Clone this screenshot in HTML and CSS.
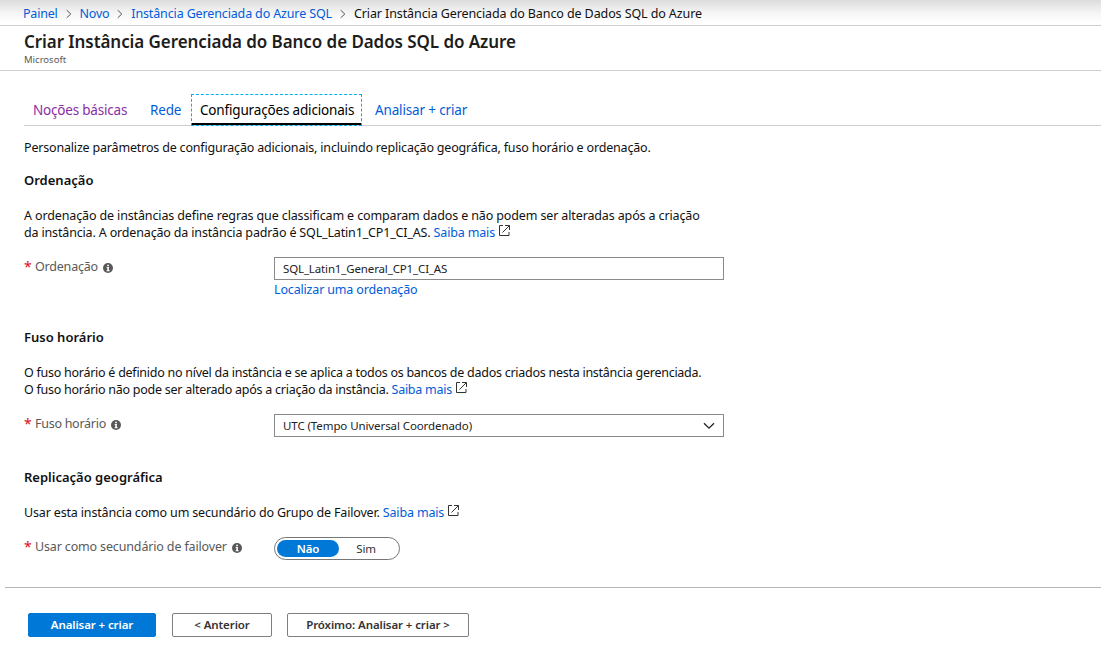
FILE: index.html
```
<!DOCTYPE html>
<html lang="pt-BR">
<head>
<meta charset="utf-8">
<title>Criar Instância Gerenciada do Banco de Dados SQL do Azure</title>
<link rel="stylesheet" href="styles.css">
</head>
<body>
<svg class="defs" width="0" height="0" aria-hidden="true">
  <symbol id="sep" viewBox="0 0 6 10"><path d="M.7 1.2 4.8 5 .7 8.8" fill="none" stroke="#555" stroke-width="1"/></symbol>
  <symbol id="ext" viewBox="0 0 11 11"><path d="M4 .5H.5v10h9.500V7M6 .5h4.500v4.500M10.300.7 3.500 7.500" fill="none" stroke="#333" stroke-width="1"/></symbol>
  <symbol id="info" viewBox="0 0 10 10"><circle cx="5" cy="5" r="5" fill="#595959"/><path d="M4.200 1.800h1.700v1.400H4.200zM3.700 4.100h2.200v3.200h.7v.9H3.600v-.9h.7V5h-.6z" fill="#fff"/></symbol>
</svg>
<nav class="crumbs">
  <a class="c1">Painel</a><svg class="sep"><use href="#sep"/></svg>
  <a class="c2">Novo</a><svg class="sep"><use href="#sep"/></svg>
  <a class="c3">Instância Gerenciada do Azure SQL</a><svg class="sep"><use href="#sep"/></svg>
  <span class="c4">Criar Instância Gerenciada do Banco de Dados SQL do Azure</span>
</nav>
<header class="head">
  <h1>Criar Instância Gerenciada do Banco de Dados SQL do Azure</h1>
  <p>Microsoft</p>
</header>
<main class="main">
  <div class="tabs">
    <a class="tab visited">Noções básicas</a>
    <a class="tab rede">Rede</a>
    <a class="tab active">Configurações adicionais</a>
    <a class="tab last">Analisar + criar</a>
  </div>
  <p class="text intro">Personalize parâmetros de configuração adicionais, incluindo replicação geográfica, fuso horário e ordenação.</p>

  <section class="section collation">
    <h2>Ordenação</h2>
    <p class="text"><span class="l1">A ordenação de instâncias define regras que classificam e comparam dados e não podem ser alteradas após a criação</span><br><span class="l2">da instância. A ordenação da instância padrão é SQL_Latin1_CP1_CI_AS. <a>Saiba mais</a></span><svg class="ext"><use href="#ext"/></svg></p>
    <div class="field">
      <div class="label"><b>*</b><span>Ordenação</span><svg class="info"><use href="#info"/></svg></div>
      <div class="control">
        <div class="box"><span class="v1">SQL_Latin1_General_CP1_CI_AS</span></div>
        <a class="find">Localizar uma ordenação</a>
      </div>
    </div>
  </section>

  <section class="section zone">
    <h2>Fuso horário</h2>
    <p class="text"><span class="l3">O fuso horário é definido no nível da instância e se aplica a todos os bancos de dados criados nesta instância gerenciada.</span><br><span class="l4">O fuso horário não pode ser alterado após a criação da instância. <a>Saiba mais</a></span><svg class="ext"><use href="#ext"/></svg></p>
    <div class="field">
      <div class="label"><b>*</b><span class="lb2">Fuso horário</span><svg class="info"><use href="#info"/></svg></div>
      <div class="control">
        <div class="box"><span class="v2">UTC (Tempo Universal Coordenado)</span><svg class="chev" viewBox="0 0 12 8"><path d="M1 1.200 6 6.200l5-5" fill="none" stroke="#222" stroke-width="1.300"/></svg></div>
      </div>
    </div>
  </section>

  <section class="section geo">
    <h2>Replicação geográfica</h2>
    <p class="text"><span class="l5">Usar esta instância como um secundário do Grupo de Failover. <a>Saiba mais</a></span><svg class="ext"><use href="#ext"/></svg></p>
    <div class="field">
      <div class="label"><b>*</b><span class="lb3">Usar como secundário de failover</span><svg class="info"><use href="#info"/></svg></div>
      <div class="control">
        <div class="toggle"><span class="on">Não</span><span class="off">Sim</span></div>
      </div>
    </div>
  </section>
</main>
<footer class="foot">
  <button class="btn primary">Analisar + criar</button>
  <button class="btn prev">&lt; Anterior</button>
  <button class="btn next">Próximo: Analisar + criar &gt;</button>
</footer>
</body>
</html>
```
FILE: styles.css
```
* { box-sizing: border-box; }
body { margin: 0; background: #fff; color: #111; font-family: "Noto Sans", "Open Sans", sans-serif; font-size: 12.5px; letter-spacing: -0.2px; overflow: hidden; }
h1, h2, p { margin: 0; }
a { color: #015cda; text-decoration: none; }
.defs { display: block; height: 0; }
.crumbs { height: 26px; padding: 2px 0 0 23px; display: flex; align-items: center; white-space: nowrap; border-bottom: 1px solid #d0d0d0; background: linear-gradient(#dcdcdc, #f4f4f4 50%, #fff 90%); line-height: 23px; }
.c2 { letter-spacing: -0.25px; }
.c3 { letter-spacing: -0.14px; }
.c4 { letter-spacing: -0.1px; }
.sep { width: 6px; height: 10px; margin: 0 8px; flex: none; }
.head { height: 45px; padding: 4px 0 0 24px; border-bottom: 1px solid #d0d0d0; }
.head h1 { font-size: 17px; line-height: 24px; font-weight: 600; color: #1d1d1d; letter-spacing: -0.07px; white-space: nowrap; }
.head p { font-size: 9.5px; line-height: 12px; color: #595959; letter-spacing: 0; }
.main { padding: 23px 0 0 24px; }
.tabs { height: 32px; display: flex; border-bottom: 1px solid #d0d0d0; font-size: 13.5px; line-height: 33px; letter-spacing: -0.15px; white-space: nowrap; }
.tab { height: 32px; }
.visited { width: 126px; padding-left: 9px; color: #8a2da5; letter-spacing: -0.2px; }
.rede { width: 41px; }
.active { width: 171px; height: 32px; padding-left: 8px; line-height: 31px; color: #000; border: 1px dashed #00b0f0; box-shadow: inset 0 -2px #000; letter-spacing: -0.17px; }
.last { padding-left: 13px; }
.text { line-height: 17px; white-space: nowrap; color: #111; }
.intro { margin-top: 13px; letter-spacing: -0.18px; }
.l1 { letter-spacing: -0.13px; }
.l2, .l5, .find { letter-spacing: -0.16px; }
.l3 { letter-spacing: -0.26px; }
.l4 { letter-spacing: -0.26px; }
.lb2 { letter-spacing: -0.27px; }
.lb3 { letter-spacing: -0.15px; }
.section h2 { font-size: 13px; font-weight: 600; line-height: 18px; letter-spacing: 0; color: #111; }
.section .text { margin-top: 18px; }
.collation { margin-top: 15px; height: 157px; }
.zone { height: 140px; }
.ext { width: 11px; height: 11px; margin-left: 4px; position: relative; top: -1px; }
.field { display: flex; margin-top: 16px; }
.label { width: 250px; display: flex; line-height: 19px; color: #595959; white-space: nowrap; }
.label b { width: 11px; color: #e00b1c; font-size: 14px; font-weight: 400; }
.info { width: 10px; height: 10px; margin: 6px 0 0 5px; }
.box { width: 450px; height: 23px; padding: 0 8px; border: 1px solid #8a8a8a; display: flex; align-items: center; justify-content: space-between; font-size: 11.5px; color: #222; }
.v1 { letter-spacing: -0.14px; }
.v2 { letter-spacing: -0.09px; }
.chev { width: 12px; height: 8px; }
.find { display: block; line-height: 18px; margin-top: 1px; }
.toggle { width: 126px; height: 23px; padding: 2px; border: 1px solid #767676; border-radius: 12px; display: flex; font-size: 11.5px; line-height: 18px; text-align: center; }
.on { width: 62px; height: 17px; border-radius: 9px; background: #0078d7; color: #fff; font-weight: 600; }
.off { width: 54px; color: #333; }
.foot { margin: 27px 0 0 5px; padding: 25px 0 0 23px; border-top: 1px solid #b5b5b5; display: flex; }
.btn { height: 24px; padding: 0; border: 1px solid #7f7f7f; border-radius: 2px; background: #fff; color: #333; font: 600 11.5px/20px "Noto Sans", "Open Sans", sans-serif; letter-spacing: -0.1px; white-space: nowrap; }
.primary { width: 128px; background: #0078d7; border-color: #0078d7; color: #fff; }
.prev { width: 100px; margin-left: 16px; }
.next { width: 182px; margin-left: 15px; }
```
